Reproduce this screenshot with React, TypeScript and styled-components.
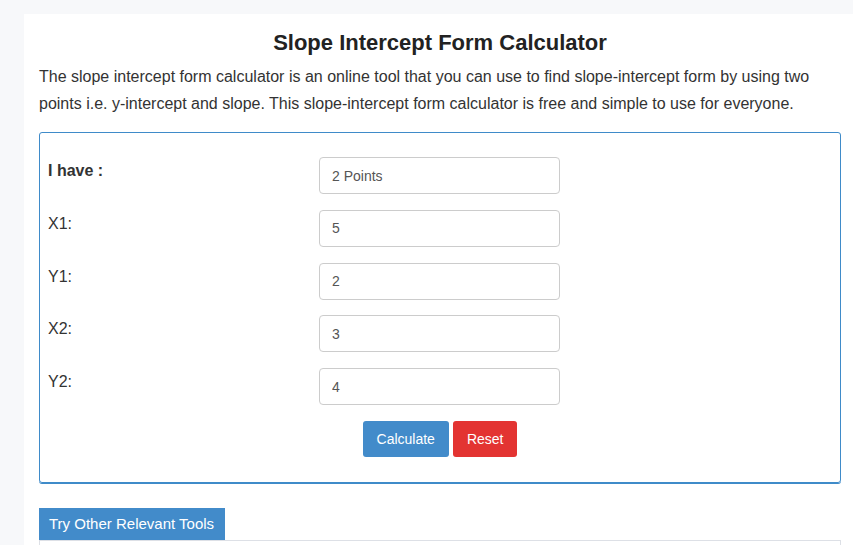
import React from 'react'
import styled, {createGlobalStyle} from 'styled-components'

const GlobalStyle = createGlobalStyle`
  html, body {
    margin: 0;
    padding: 0;
    background: #f7f8fa;
    overflow: hidden;
    font-family: "Liberation Sans", Arial, sans-serif;
    color: #333;
  }
`;

const Page = styled.div`
  padding: 14px 0 0 24px;
`;

const Card = styled.div`
  width: 802px;
  background: #fff;
  padding: 16px 15px 0 15px;
  min-height: 600px;
`;

const Title = styled.h1`
  margin: 0;
  font-size: 22px;
  line-height: 26px;
  font-weight: bold;
  text-align: center;
  color: #222;
`;

const Intro = styled.p`
  margin: 7px 0 15px 0;
  font-size: 16px;
  line-height: 27px;
  color: #333;
`;

const CalcBox = styled.div`
  border: 1px solid #3f8bc9;
  border-radius: 3px;
  box-shadow: 0 1px 0 #3f8bc9;
  padding: 24px 8px 25px 8px;
  display: flex;
  flex-direction: column;
  gap: 15.75px;
`;

const Row = styled.div`
  display: grid;
  grid-template-columns: 271px 241px;
  align-items: start;
`;

const Label = styled.label<{$bold?: boolean}>`
  padding-top: 2px;
  font-size: 16px;
  line-height: 24px;
  font-weight: ${p => (p.$bold ? 'bold' : 'normal')};
  color: #333;
`;

const Field = styled.input`
  box-sizing: border-box;
  height: 37px;
  width: 241px;
  border: 1px solid #ccc;
  border-radius: 4px;
  padding: 0 12px;
  font-family: "Liberation Sans", Arial, sans-serif;
  font-size: 14px;
  color: #555;
  background: #fff;
  outline: none;
`;

const Buttons = styled.div`
  display: flex;
  justify-content: center;
  gap: 4px;
`;

const Button = styled.button<{$kind: 'primary' | 'danger'}>`
  height: 36px;
  padding: 0 14px;
  border: none;
  border-radius: 3px;
  font-family: "Liberation Sans", Arial, sans-serif;
  font-size: 14px;
  color: #fff;
  background: ${p => (p.$kind === 'primary' ? '#428bca' : '#e33432')};
  cursor: pointer;
`;

const ToolsSection = styled.div`
  margin-top: 25px;
`;

const Tab = styled.div`
  display: inline-block;
  background: #428bca;
  color: #fff;
  font-size: 15px;
  line-height: 32px;
  padding: 0 11px 0 10px;
`;

const ToolsBody = styled.div`
  border: 1px solid #dde0e6;
  height: 60px;
`;

const rows = [
  {label: 'I have :', value: '2 Points', bold: true},
  {label: 'X1:', value: '5'},
  {label: 'Y1:', value: '2'},
  {label: 'X2:', value: '3'},
  {label: 'Y2:', value: '4'},
];

const App: React.FunctionComponent = () => {
  return (
    <Page>
      <GlobalStyle/>
      <Card>
        <Title>Slope Intercept Form Calculator</Title>
        <Intro>
          The slope intercept form calculator is an online tool that you can use to find slope-intercept form by using two
          points i.e. y-intercept and slope. This slope-intercept form calculator is free and simple to use for everyone.
        </Intro>
        <CalcBox>
          {rows.map(r => (
            <Row key={r.label}>
              <Label $bold={r.bold}>{r.label}</Label>
              <Field defaultValue={r.value}/>
            </Row>
          ))}
          <Buttons>
            <Button $kind="primary">Calculate</Button>
            <Button $kind="danger">Reset</Button>
          </Buttons>
        </CalcBox>
        <ToolsSection>
          <Tab>Try Other Relevant Tools</Tab>
          <ToolsBody/>
        </ToolsSection>
      </Card>
    </Page>
  )
}

export default App;
